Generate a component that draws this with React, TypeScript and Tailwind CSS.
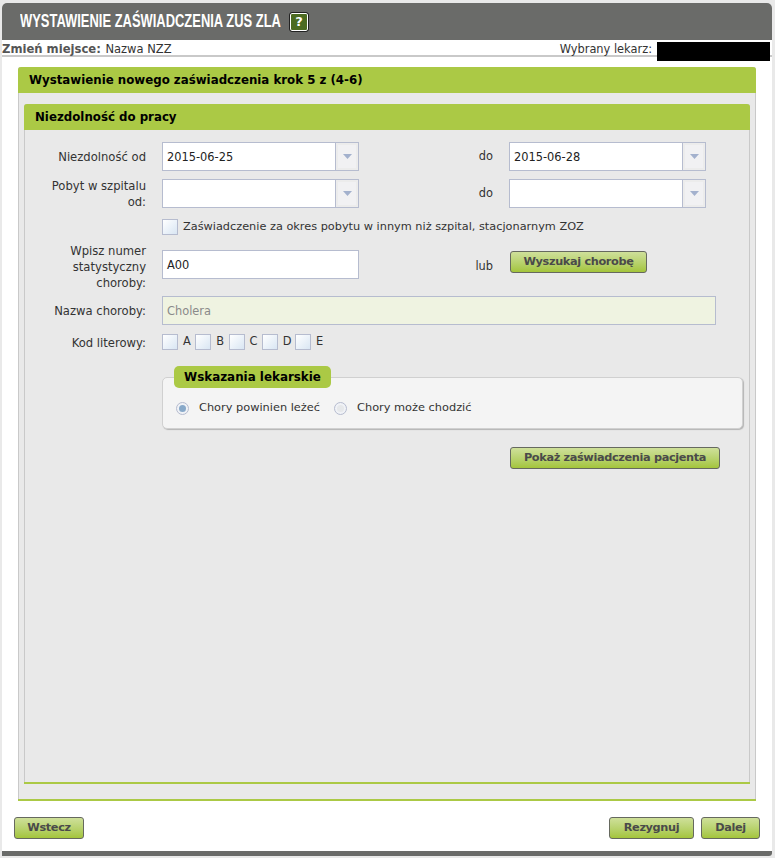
const body = { fontFamily: '"DejaVu Sans", sans-serif' };

function Btn({ w, children, className = "" }: { w: string; children: React.ReactNode; className?: string }) {
  return (
    <button
      className={`${w} ${className} flex h-[22px] shrink-0 items-center justify-center rounded-[3px] border border-[#66695f] bg-gradient-to-b from-[#cfe09a] to-[#a4c53a] text-[11.3px] leading-[18px] font-bold tracking-[-0.35px] whitespace-nowrap text-[#4a4a4a]`}
    >
      {children}
    </button>
  );
}

function DateBox({ value }: { value?: string }) {
  return (
    <div className="flex h-[29px] w-[197px] shrink-0 border border-[#b6bccf] bg-white">
      <div className="flex-1 pl-[4px] text-[11.4px] leading-[29px] text-[#222]">{value}</div>
      <div className="w-[23px] border-l border-[#b6bccf] bg-[#ececec] p-[2px]">
        <div className="flex h-full w-full items-center justify-center bg-[#f1f1f3]">
          <svg width="9" height="5" viewBox="0 0 9 5">
            <path d="M0 0H9L4.5 5Z" fill="#a3b1cd" />
          </svg>
        </div>
      </div>
    </div>
  );
}

function Check() {
  return <div className="h-[16px] w-[16px] shrink-0 border border-[#b6bccf] bg-gradient-to-br from-white to-[#d9e6f3]" />;
}

function Radio({ on }: { on?: boolean }) {
  return (
    <div className="flex h-[13px] w-[13px] shrink-0 items-center justify-center rounded-full border border-[#b6bccf] bg-[#f0f2f6]">
      <div className={`h-[7px] w-[7px] rounded-full ${on ? "bg-[#88a9c9]" : "bg-[#e6e8ea]"}`} />
    </div>
  );
}

function Label({ children }: { children: React.ReactNode }) {
  return <div className="mr-[16px] w-[122px] shrink-0 pt-[1px] text-right text-[11.6px] leading-[16px] text-[#333]">{children}</div>;
}

function Between({ children }: { children: React.ReactNode }) {
  return <div className="w-[150px] shrink-0 pt-[1px] pr-[16px] text-right text-[11.4px] text-[#333]">{children}</div>;
}

function Letter({ l }: { l: string }) {
  return (
    <div className="flex w-[33.25px] items-center">
      <Check />
      <span className="pl-[5px] text-[11.4px] text-[#333]">{l}</span>
    </div>
  );
}

export default function App() {
  return (
    <div style={body} className="h-[858px] w-[775px] overflow-hidden bg-[#e9e9e9] pt-[3px] pl-[2px]">
      <div className="flex h-[853px] w-[770px] flex-col overflow-hidden rounded-t-[5px] rounded-br-[3px] bg-white">
        <div className="flex h-[37px] shrink-0 items-center bg-[#6a6b69] pl-[18px]">
          <div
            style={{ fontFamily: '"Liberation Sans", sans-serif' }}
            className="w-[261px] shrink-0 origin-left scale-x-[0.681] text-[19px] font-bold whitespace-nowrap text-white"
          >
            WYSTAWIENIE ZAŚWIADCZENIA ZUS ZLA
          </div>
          <div className="ml-[9px] flex h-[18px] w-[18px] items-center justify-center rounded-[2px] border border-white bg-[#4c6b21] text-[13px] font-bold text-white outline outline-[#222]">
            ?
          </div>
        </div>
        <div className="relative z-10 flex h-[15px] shrink-0 justify-between text-[#333]">
          <div className="text-[11.5px] leading-[18px] whitespace-nowrap">
            <span className="mr-[1px] text-[11.6px] font-bold text-[#555]">Zmień miejsce:</span> Nazwa NZZ
          </div>
          <div className="flex items-start pr-[2px] text-[11.4px] leading-[18px]">
            <span className="mr-[5px]">Wybrany lekarz:</span>
            <div className="mt-[2px] h-[19px] w-[113px] bg-black" />
          </div>
        </div>
        <div className="h-[2px] shrink-0 bg-[#c9c9c9]" />
        <div className="flex min-h-0 flex-1 flex-col px-[16px] pt-[10px]">
          <div className="flex h-[734px] w-[738px] shrink-0 flex-col rounded-t-[3px] border-b-2 border-[#abc945] bg-[#e9e9e9] shadow-[inset_1px_0_0_#c9c9c9,inset_-1px_0_0_#c9c9c9]">
            <div className="flex h-[26px] shrink-0 items-center rounded-t-[3px] bg-[#abc945] pt-[2px] pl-[11px] text-[11.8px] font-bold text-black">
              Wystawienie nowego zaświadczenia krok 5 z (4-6)
            </div>
            <div className="mx-[6px] mt-[11px] flex h-[680px] shrink-0 flex-col rounded-t-[3px] border-b-2 border-[#abc945] shadow-[inset_1px_0_0_#c9c9c9,inset_-1px_0_0_#c9c9c9]">
              <div className="flex h-[26px] shrink-0 items-center rounded-t-[3px] bg-[#abc945] pt-[2px] pl-[11px] text-[11.8px] font-bold text-black">
                Niezdolność do pracy
              </div>
              <div className="flex flex-col pt-[12px]">
                <div className="flex h-[29px] items-center">
                  <Label>Niezdolność od</Label>
                  <DateBox value="2015-06-25" />
                  <Between>do</Between>
                  <DateBox value="2015-06-28" />
                </div>
                <div className="mt-[8px] flex h-[29px] items-center">
                  <Label>
                    Pobyt w szpitalu
                    <br />
                    od:
                  </Label>
                  <DateBox />
                  <Between>do</Between>
                  <DateBox />
                </div>
                <div className="mt-[11px] ml-[138px] flex h-[16px] items-center">
                  <Check />
                  <span className="ml-[5px] text-[11.3px] whitespace-nowrap text-[#333]">
                    Zaświadczenie za okres pobytu w innym niż szpital, stacjonarnym ZOZ
                  </span>
                </div>
                <div className="mt-[7px] flex h-[48px] items-center">
                  <Label>
                    Wpisz numer
                    <br />
                    statystyczny
                    <br />
                    choroby:
                  </Label>
                  <div className="mt-[-3px] h-[29px] w-[197px] shrink-0 border border-[#b6bccf] bg-white pl-[4px] text-[11.4px] leading-[29px] text-[#222]">
                    A00
                  </div>
                  <Between>lub</Between>
                  <Btn w="w-[137px]" className="mt-[-8px] ml-[1px]">Wyszukaj chorobę</Btn>
                </div>
                <div className="mt-[6px] flex h-[29px] items-center">
                  <Label>Nazwa choroby:</Label>
                  <div className="h-[29px] w-[554px] shrink-0 border border-[#b6bccf] bg-[#eff3e1] pl-[4px] text-[11.4px] leading-[29px] text-[#8a8a8a]">
                    Cholera
                  </div>
                </div>
                <div className="mt-[9px] flex h-[16px] items-center">
                  <Label>Kod literowy:</Label>
                  <div className="flex">
                    <Letter l="A" />
                    <Letter l="B" />
                    <Letter l="C" />
                    <Letter l="D" />
                    <Letter l="E" />
                  </div>
                </div>
                <div className="relative mt-[27px] ml-[138px] flex h-[52px] w-[581px] items-center rounded-[5px] border border-[#d0d0d0] bg-[#f4f4f4] pt-[10px] pl-[13px] text-[11.35px] text-[#333] shadow-[1px_1px_1px_#b4b4b4]">
                  <div className="absolute top-[-12px] left-[11px] flex h-[22px] w-[157px] items-center justify-center rounded-[5px] bg-[#abc945] pt-[1px] text-[11.9px] font-bold text-black">
                    Wskazania lekarskie
                  </div>
                  <Radio on />
                  <span className="ml-[10px]">Chory powinien leżeć</span>
                  <span className="ml-[14px]"><Radio /></span>
                  <span className="ml-[10px]">Chory może chodzić</span>
                </div>
                <div className="mt-[18px] ml-[486px]">
                  <Btn w="w-[210px]">Pokaż zaświadczenia pacjenta</Btn>
                </div>
              </div>
            </div>
          </div>
          <div className="mt-[16px] ml-[-4px] flex w-[746px] items-start justify-between">
            <Btn w="w-[70px]">Wstecz</Btn>
            <div className="flex gap-[7px]">
              <Btn w="w-[85px]">Rezygnuj</Btn>
              <Btn w="w-[59px]">Dalej</Btn>
            </div>
          </div>
        </div>
        <div className="h-[5px] shrink-0 bg-[#6a6b69]" />
      </div>
    </div>
  );
}
